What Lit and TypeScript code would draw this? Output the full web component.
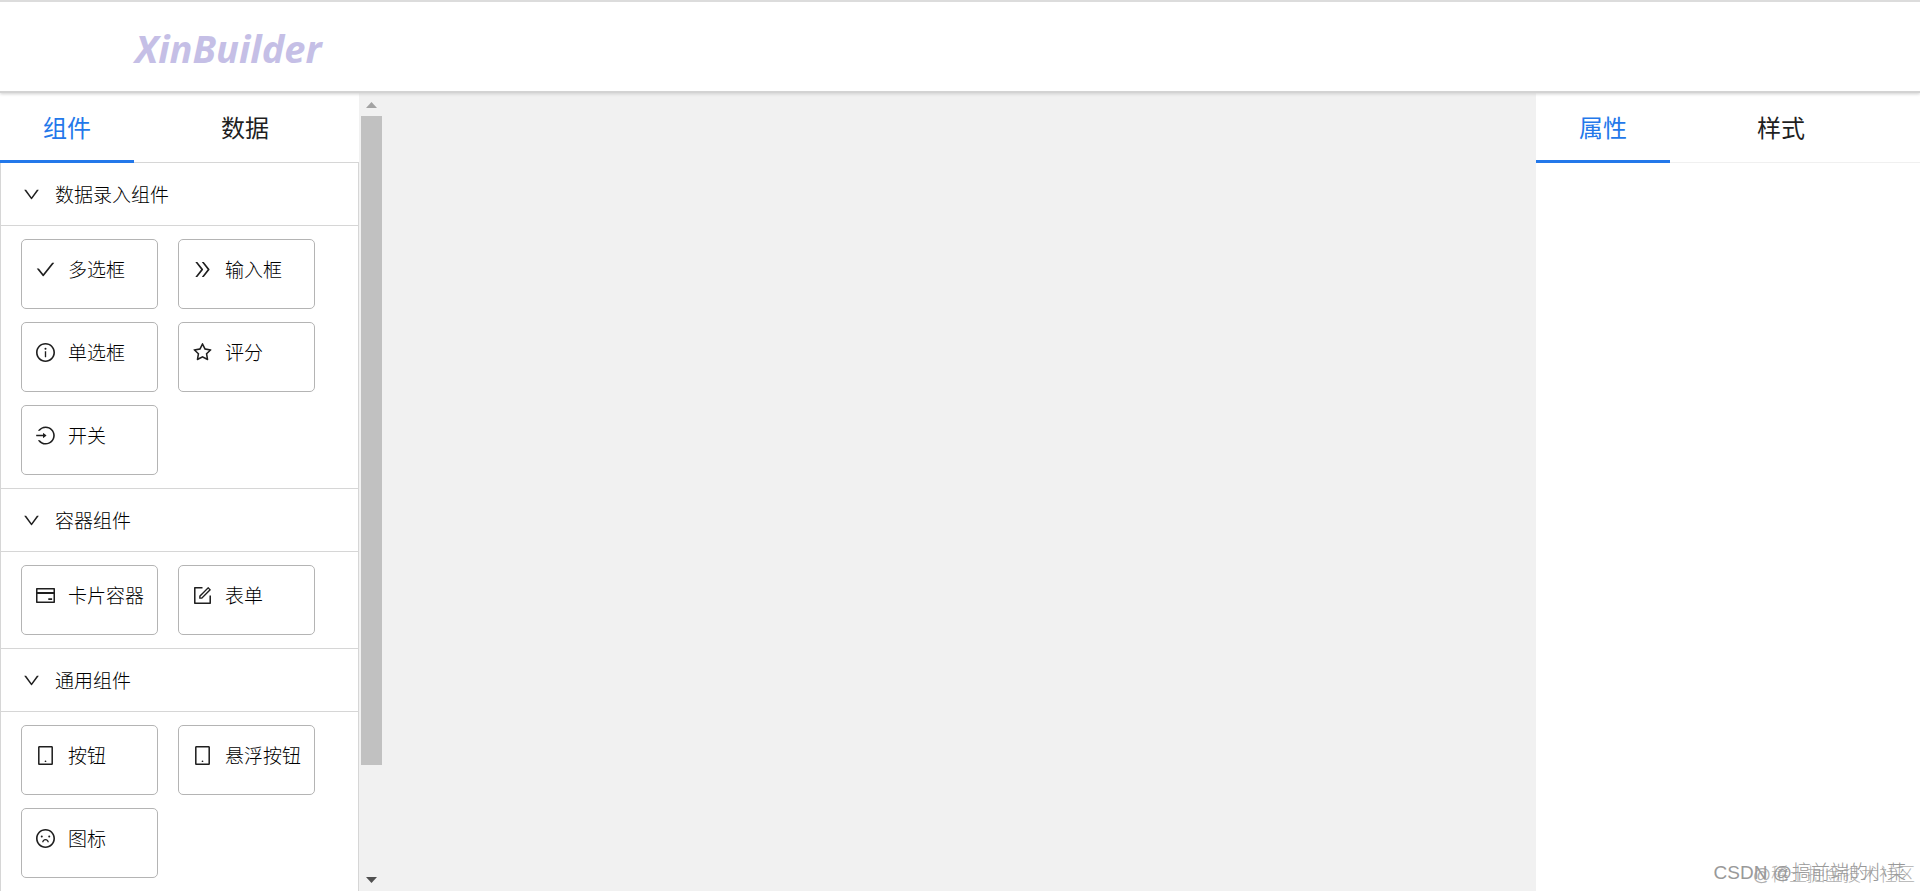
import { LitElement, html, css, svg } from "lit";
import { customElement, property, state } from "lit/decorators.js";
import { classMap } from "lit/directives/class-map.js";

const RING =
  "M512 64C264.6 64 64 264.6 64 512s200.6 448 448 448 448-200.6 448-448S759.4 64 512 64zm0 820c-205.4 0-372-166.6-372-372s166.6-372 372-372 372 166.6 372 372-166.6 372-372 372z";

const ICONS: Record<string, string[]> = {
  down: [
    "M884 256h-75c-5.1 0-9.9 2.5-12.9 6.6L512 654.2 227.9 262.6c-3-4.1-7.8-6.6-12.9-6.6h-75c-6.5 0-10.3 7.4-6.5 12.7l352.6 486.1c12.8 17.6 39 17.6 51.7 0l352.6-486.1c3.9-5.3.1-12.7-6.4-12.7z",
  ],
  check: [
    "M912 190h-69.9c-9.8 0-19.1 4.5-25.1 12.2L404.7 724.5 207 474a32 32 0 00-25.1-12.2H112c-6.7 0-10.4 7.7-6.3 12.9l273.9 347c12.8 16.2 37.4 16.2 50.3 0l488.4-618.9c4.1-5.1.4-12.8-6.3-12.8z",
  ],
  doubleRight: [
    "M533.2 492.3L277.9 166.1c-3-3.9-7.7-6.1-12.6-6.1H188c-6.7 0-10.4 7.7-6.3 12.9L447.1 512 181.7 851.1A7.98 7.98 0 00188 864h77.3c4.9 0 9.6-2.3 12.6-6.1l255.3-326.1c9.1-11.7 9.1-27.9 0-39.5zm304 0L581.9 166.1c-3-3.9-7.7-6.1-12.6-6.1H492c-6.7 0-10.4 7.7-6.3 12.9L751.1 512 485.7 851.1A7.98 7.98 0 00492 864h77.3c4.9 0 9.6-2.3 12.6-6.1l255.3-326.1c9.1-11.7 9.1-27.9 0-39.5z",
  ],
  info: [
    RING,
    "M464 336a48 48 0 1096 0 48 48 0 10-96 0zm72 112h-48c-4.4 0-8 3.6-8 8v272c0 4.4 3.6 8 8 8h48c4.4 0 8-3.6 8-8V456c0-4.4-3.6-8-8-8z",
  ],
  star: [
    "M908.1 353.1l-253.9-36.9L540.7 86.1c-3.1-6.3-8.2-11.4-14.5-14.5-15.8-7.8-35-1.3-42.9 14.5L369.8 316.2l-253.9 36.9c-7 1-13.4 4.3-18.3 9.3a32.05 32.05 0 00.6 45.3l183.7 179.1-43.4 252.9a31.95 31.95 0 0046.4 33.7L512 754l227.1 119.4c6.2 3.3 13.4 4.4 20.3 3.2 17.4-3 29.1-19.5 26.1-36.9l-43.4-252.9 183.7-179.1c5-4.9 8.3-11.3 9.3-18.3 2.7-17.5-9.5-33.7-27-36.3zM664.8 561.6l36.1 210.3L512 672.7 323.1 772l36.1-210.3-152.8-149L417.6 382 512 190.7 606.4 382l211.2 30.7-152.8 148.9z",
  ],
  login: [
    "M521.7 82c-152.5-.4-286.7 78.5-363.4 197.7-3.4 5.3.4 12.3 6.7 12.3h70.3c4.8 0 9.3-2.1 12.3-5.8 7-8.5 14.5-16.7 22.4-24.5 32.6-32.5 70.5-58.1 112.7-75.9 43.6-18.4 90-27.8 137.9-27.8 47.9 0 94.3 9.3 137.9 27.8 42.2 17.8 80.1 43.4 112.7 75.9 32.6 32.5 58.1 70.4 76 112.5C865.7 417.8 875 464.1 875 512c0 47.9-9.4 94.2-27.8 137.8-17.8 42.1-43.4 80-76 112.5s-70.5 58.1-112.7 75.9A352.8 352.8 0 01520.6 866c-47.9 0-94.3-9.4-137.9-27.8A353.84 353.84 0 01270 762.3c-7.9-7.9-15.3-16.1-22.4-24.5-3-3.7-7.6-5.8-12.3-5.8H165c-6.3 0-10.2 7-6.7 12.3C234.9 863.2 368.5 942 520.6 942c236.2 0 428-190.1 430.4-425.6C953.4 277.1 761.3 82.6 521.7 82z",
    "M395.02 624v-76h-314c-4.4 0-8-3.6-8-8v-56c0-4.4 3.6-8 8-8h314v-76c0-6.7 7.8-10.5 13-6.3l141.9 112a8 8 0 010 12.6l-141.9 112c-5.2 4.1-13 .4-13-6.3z",
  ],
  card: [
    "M928 160H96c-17.7 0-32 14.3-32 32v640c0 17.7 14.3 32 32 32h832c17.7 0 32-14.3 32-32V192c0-17.7-14.3-32-32-32zm-792 72h752v120H136V232zm752 560H136V440h752v352zm-237-64h165c4.4 0 8-3.6 8-8v-72c0-4.4-3.6-8-8-8H651c-4.4 0-8 3.6-8 8v72c0 4.4 3.6 8 8 8z",
  ],
  form: [
    "M904 512h-56c-4.4 0-8 3.6-8 8v320H184V184h320c4.4 0 8-3.6 8-8v-56c0-4.4-3.6-8-8-8H144c-17.7 0-32 14.3-32 32v736c0 17.7 14.3 32 32 32h736c17.7 0 32-14.3 32-32V520c0-4.4-3.6-8-8-8z",
    "M355.9 534.9L354 653.8c-.1 8.9 7.1 16.2 16 16.2h.4l118-2.9c2-.1 4-.9 5.4-2.3l415.9-415c3.1-3.1 3.1-8.2 0-11.3L785.4 114.3c-1.6-1.6-3.6-2.3-5.7-2.3s-4.1.8-5.7 2.3l-415.8 415a8.3 8.3 0 00-2.3 5.6zm63.5 23.6L779.7 199l45.2 45.1-360.5 359.7-45.7 1.1.7-46.4z",
  ],
  tablet: [
    "M800 64H224c-35.3 0-64 28.7-64 64v768c0 35.3 28.7 64 64 64h576c35.3 0 64-28.7 64-64V128c0-35.3-28.7-64-64-64zm-8 824H232V136h560v752z",
    "M472 784a40 40 0 1080 0 40 40 0 10-80 0z",
  ],
  frown: [
    RING,
    "M288 421a48 48 0 1096 0 48 48 0 10-96 0zm352 0a48 48 0 1096 0 48 48 0 10-96 0z",
    "M512 533c-85.5 0-155.6 67.3-160 151.6a8 8 0 008 8.4h48.1c4.2 0 7.8-3.2 8.1-7.4C420 636.1 461.5 597 512 597s92.1 39.1 95.8 88.6c.3 4.2 3.9 7.4 8.1 7.4H664a8 8 0 008-8.4C667.6 600.3 597.5 533 512 533z",
  ],
};

interface Item {
  icon: string;
  label: string;
}

interface Group {
  title: string;
  items: Item[];
}

const GROUPS: Group[] = [
  {
    title: "数据录入组件",
    items: [
      { icon: "check", label: "多选框" },
      { icon: "doubleRight", label: "输入框" },
      { icon: "info", label: "单选框" },
      { icon: "star", label: "评分" },
      { icon: "login", label: "开关" },
    ],
  },
  {
    title: "容器组件",
    items: [
      { icon: "card", label: "卡片容器" },
      { icon: "form", label: "表单" },
    ],
  },
  {
    title: "通用组件",
    items: [
      { icon: "tablet", label: "按钮" },
      { icon: "tablet", label: "悬浮按钮" },
      { icon: "frown", label: "图标" },
    ],
  },
];

const icon = (name: string) => html`
  <svg class="icon" viewBox="64 64 896 896" fill="currentColor" aria-hidden="true">
    ${ICONS[name].map((d) => svg`<path d=${d}></path>`)}
  </svg>
`;

/** A row of tabs with a bar under the selected one. */
@customElement("xb-tabs")
export class XbTabs extends LitElement {
  @property({ type: Array }) labels: string[] = [];
  @state() private selected = 0;

  static styles = css`
    :host {
      display: block;
    }
    .tabs {
      display: flex;
      gap: 44px;
      border-bottom: 1px solid #f0f0f0;
    }
    .tab {
      margin: 0 0 -1px;
      padding: 15px 43px;
      border: 0;
      border-bottom: 3px solid transparent;
      background: none;
      color: #1f1f1f;
      font: inherit;
      font-size: 24px;
      font-weight: 400;
      line-height: 37px;
      cursor: pointer;
    }
    .tab.on {
      color: #2378ea;
      border-bottom-color: #2378ea;
    }
  `;

  render() {
    return html`
      <div class="tabs" role="tablist">
        ${this.labels.map(
          (label, i) => html`
            <button
              class=${classMap({ tab: true, on: i === this.selected })}
              role="tab"
              aria-selected=${i === this.selected ? "true" : "false"}
              @click=${() => (this.selected = i)}
            >${label}</button>
          `
        )}
      </div>
    `;
  }
}

/** Collapsible groups of components that can be dragged onto the canvas. */
@customElement("xb-palette")
export class XbPalette extends LitElement {
  @state() private closed: string[] = [];

  static styles = css`
    :host {
      display: block;
    }
    .palette {
      border: 1px solid #d6d6d6;
      border-top: 0;
      color: #000;
    }
    .icon {
      flex: none;
      width: 19px;
      height: 19px;
      color: #1f1f1f;
    }
    .head {
      display: flex;
      align-items: center;
      gap: 15px;
      width: 100%;
      padding: 16px 22px;
      border: 0;
      border-top: 1px solid #d6d6d6;
      background: none;
      color: inherit;
      font: inherit;
      font-size: 19px;
      line-height: 30px;
      text-align: left;
      cursor: pointer;
    }
    .head .icon {
      width: 17px;
      height: 17px;
    }
    .head.shut .icon {
      transform: rotate(-90deg);
    }
    .body {
      display: grid;
      grid-template-columns: repeat(auto-fill, 137px);
      gap: 13px 20px;
      padding: 13px 20px;
      border-top: 1px solid #d6d6d6;
    }
    .item {
      display: flex;
      align-items: center;
      gap: 13px;
      padding: 14px 0 24px 14px;
      border: 1px solid #b4b4b4;
      border-radius: 5px;
      background: #fff;
      color: inherit;
      font: inherit;
      font-size: 19px;
      line-height: 30px;
      white-space: nowrap;
      cursor: grab;
    }
  `;

  private toggle(title: string) {
    this.closed = this.closed.includes(title)
      ? this.closed.filter((t) => t !== title)
      : [...this.closed, title];
  }

  render() {
    return html`
      <div class="palette">
        ${GROUPS.map((group) => {
          const shut = this.closed.includes(group.title);
          return html`
            <section>
              <button
                class=${classMap({ head: true, shut })}
                aria-expanded=${shut ? "false" : "true"}
                @click=${() => this.toggle(group.title)}
              >${icon("down")}<span>${group.title}</span></button>
              ${shut
                ? null
                : html`<div class="body">
                    ${group.items.map(
                      (item) => html`<button class="item" draggable="true">
                        ${icon(item.icon)}<span>${item.label}</span>
                      </button>`
                    )}
                  </div>`}
            </section>
          `;
        })}
      </div>
    `;
  }
}

@customElement("app-root")
export class AppRoot extends LitElement {
  static styles = css`
    :host {
      display: flex;
      flex-direction: column;
      position: relative;
      height: 100vh;
      overflow: hidden;
      background: #f1f1f1;
      font-family: "Noto Sans CJK SC", sans-serif;
      font-weight: 300;
    }
    .top {
      position: relative;
      flex: none;
      padding: 25px 135px 22px;
      border-top: 2px solid #dcdcdc;
      border-bottom: 2px solid #d3d3d3;
      box-shadow: 0 1px 3px #d0d0d0;
      background: #fff;
    }
    .logo {
      margin: 0;
      color: #c5bfe6;
      font-family: "Noto Sans", sans-serif;
      font-size: 38px;
      font-style: italic;
      font-weight: 700;
      line-height: 42px;
    }
    .work {
      display: grid;
      grid-template-columns: 20% 1fr 20%;
      flex: 1;
      min-height: 0;
    }
    .side {
      display: flex;
      min-height: 0;
      overflow: hidden;
    }
    .list {
      flex: 1;
      overflow: hidden;
      background: #fff;
    }
    .list xb-palette {
      margin-top: -1px;
    }
    .bar {
      display: flex;
      flex-direction: column;
      flex: none;
      width: 21px;
      padding: 0 2px;
    }
    .arrow {
      flex: none;
      height: 23px;
      padding: 0;
      border: 0;
      background: none;
      color: #a3a3a3;
    }
    .arrow.down {
      color: #505050;
    }
    .arrow svg {
      display: block;
      width: 11px;
      height: 6px;
      margin: 0 auto;
    }
    .thumb {
      flex: 648;
      background: #c1c1c1;
    }
    .rest {
      flex: 103;
    }
    .props {
      background: #fff;
    }
    .mark {
      position: absolute;
      right: 14px;
      bottom: 4px;
      color: #999;
      font-family: "Liberation Sans", "Noto Sans CJK SC", sans-serif;
      font-size: 19px;
      line-height: 28px;
    }
    .mark.second {
      right: 5px;
      bottom: 2px;
      color: #b0b0b0;
      font-size: 18px;
    }
  `;

  render() {
    return html`
      <header class="top"><h1 class="logo">XinBuilder</h1></header>
      <div class="work">
        <aside class="side">
          <div class="list">
            <xb-tabs .labels=${["组件", "数据"]}></xb-tabs>
            <xb-palette></xb-palette>
          </div>
          <div class="bar">
            <button class="arrow up" aria-label="向上滚动">
              <svg viewBox="0 0 11 6" fill="currentColor"><path d="M0 6L5.5 0 11 6z"></path></svg>
            </button>
            <div class="thumb"></div>
            <div class="rest"></div>
            <button class="arrow down" aria-label="向下滚动">
              <svg viewBox="0 0 11 6" fill="currentColor"><path d="M0 0h11L5.5 6z"></path></svg>
            </button>
          </div>
        </aside>
        <main></main>
        <aside class="props">
          <xb-tabs .labels=${["属性", "样式"]}></xb-tabs>
        </aside>
      </div>
      <div class="mark second">@稀土掘金技术社区</div>
      <div class="mark">CSDN @搞前端的小菜</div>
    `;
  }
}
